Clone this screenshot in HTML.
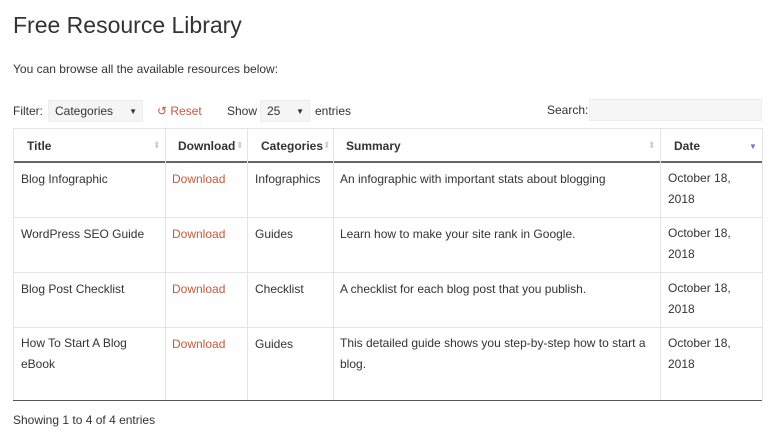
<!DOCTYPE html>
<html><head><style>
body{margin:0;width:770px;height:437px;background:#fff;font-family:"Liberation Sans",sans-serif;color:#333;position:relative;overflow:hidden}
.a{position:absolute;white-space:nowrap;font-size:12px}
h1{position:absolute;left:13px;top:12px;margin:0;font-weight:normal;font-size:23px;color:#333}
.sel{position:absolute;background:#f5f5f5;border:1px solid #eee;font-size:12px;box-sizing:border-box;padding:3px 6px}
.v{position:absolute;width:1px;background:#e4e4e4}
.h{position:absolute;height:1px;background:#e4e4e4}
.dl{color:#c9573a}
.th{font-weight:bold}
.s{position:absolute;color:#ccc;font-size:9px;top:140px}
.m{line-height:21px;margin-top:-4px}
</style></head><body>
<h1>Free Resource Library</h1>
<div class="a" style="left:13px;top:62px">You can browse all the available resources below:</div>
<div class="a" style="left:13px;top:104px">Filter:</div>
<div class="sel" style="left:48px;top:100px;width:95px;height:22px">Categories<span style="position:absolute;right:5px;font-size:8px;top:6px">▼</span></div>
<div class="a dl" style="left:157px;top:104px">↺ Reset</div>
<div class="a" style="left:227px;top:104px">Show</div>
<div class="sel" style="left:260px;top:100px;width:50px;height:22px">25<span style="position:absolute;right:5px;font-size:8px;top:6px">▼</span></div>
<div class="a" style="left:315px;top:104px">entries</div>
<div class="a" style="left:547px;top:103px">Search:</div>
<div class="sel" style="left:589px;top:99px;width:173px;height:22px;background:#f7f7f7"></div>

<div class="h" style="left:13px;top:128px;width:749px"></div>
<div class="h" style="left:13px;top:161px;width:749px;height:2px;background:#666"></div>
<div class="h" style="left:13px;top:217px;width:749px"></div>
<div class="h" style="left:13px;top:272px;width:749px"></div>
<div class="h" style="left:13px;top:327px;width:749px"></div>
<div class="h" style="left:13px;top:400px;width:749px;background:#555"></div>
<div class="v" style="left:13px;top:128px;height:272px"></div>
<div class="v" style="left:165px;top:128px;height:272px"></div>
<div class="v" style="left:247px;top:128px;height:272px"></div>
<div class="v" style="left:333px;top:128px;height:272px"></div>
<div class="v" style="left:660px;top:128px;height:272px"></div>
<div class="v" style="left:762px;top:128px;height:272px"></div>

<div class="a th" style="left:27px;top:139px">Title</div>
<div class="s" style="left:153px">⬍</div>
<div class="a th" style="left:178px;top:139px">Download</div>
<div class="s" style="left:236px">⬍</div>
<div class="a th" style="left:261px;top:139px">Categories</div>
<div class="s" style="left:323px">⬍</div>
<div class="a th" style="left:346px;top:139px">Summary</div>
<div class="s" style="left:648px">⬍</div>
<div class="a th" style="left:674px;top:139px">Date</div>
<div class="a" style="left:749px;top:142px;color:#6b7bc9;font-size:8px">▼</div>

<div class="a" style="left:21px;top:172px">Blog Infographic</div>
<div class="a dl" style="left:172px;top:172px">Download</div>
<div class="a" style="left:255px;top:172px">Infographics</div>
<div class="a" style="left:340px;top:172px">An infographic with important stats about blogging</div>
<div class="a m" style="left:668px;top:172px">October 18,<br>2018</div>

<div class="a" style="left:21px;top:227px">WordPress SEO Guide</div>
<div class="a dl" style="left:172px;top:227px">Download</div>
<div class="a" style="left:255px;top:227px">Guides</div>
<div class="a" style="left:340px;top:227px">Learn how to make your site rank in Google.</div>
<div class="a m" style="left:668px;top:227px">October 18,<br>2018</div>

<div class="a" style="left:21px;top:282px">Blog Post Checklist</div>
<div class="a dl" style="left:172px;top:282px">Download</div>
<div class="a" style="left:255px;top:282px">Checklist</div>
<div class="a" style="left:340px;top:282px">A checklist for each blog post that you publish.</div>
<div class="a m" style="left:668px;top:282px">October 18,<br>2018</div>

<div class="a m" style="left:21px;top:337px">How To Start A Blog<br>eBook</div>
<div class="a dl" style="left:172px;top:337px">Download</div>
<div class="a" style="left:255px;top:337px">Guides</div>
<div class="a m" style="left:340px;top:337px">This detailed guide shows you step-by-step how to start a<br>blog.</div>
<div class="a m" style="left:668px;top:337px">October 18,<br>2018</div>

<div class="a" style="left:13px;top:413px">Showing 1 to 4 of 4 entries</div>
</body></html>
